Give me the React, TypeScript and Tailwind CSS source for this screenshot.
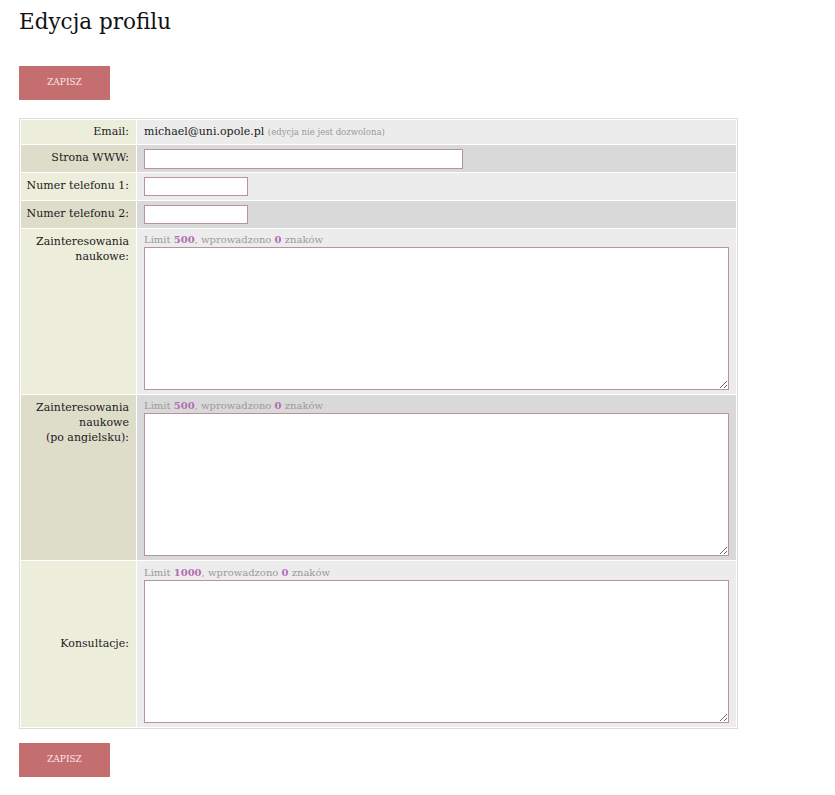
import React from "react";

const serif = { fontFamily: '"DejaVu Serif", serif' };

function SaveButton() {
  return (
    <button
      type="button"
      className="w-[91px] h-[34px] bg-[#c46e70] text-[#fde6e6] text-[9px] flex items-center justify-center"
    >
      ZAPISZ
    </button>
  );
}

function Hint({ limit }: { limit: number }) {
  return (
    <div className="text-[10px] leading-[13px] text-[#9a9a9a] mb-[1px]">
      Limit <b className="text-[#b26db3]">{limit}</b>, wprowadzono{" "}
      <b className="text-[#b26db3]">0</b> znaków
    </div>
  );
}

const labelLight = "bg-[#ededdb]";
const labelDark = "bg-[#ddddca]";
const valueLight = "bg-[#ececec]";
const valueDark = "bg-[#d9d9d9]";

const inputCls = "block bg-white border border-[#b8939b] outline-none";

export default function App() {
  return (
    <div className="min-h-[795px] bg-white pl-[19px] text-[#1a1a1a]" style={serif}>
      <h1 className="pt-[9px] text-[21.5px] leading-[25px] font-normal text-[#111]">
        Edycja profilu
      </h1>

      <div className="mt-[32px]">
        <SaveButton />
      </div>

      <table className="mt-[18px] w-[719px] border border-[#dcdcdc] border-separate border-spacing-[1px] bg-white text-[11px] table-fixed">
        <colgroup>
          <col className="w-[115px]" />
          <col />
        </colgroup>
        <tbody>
          <tr>
            <td className={`${labelLight} h-[24px] pr-[7px] text-right align-middle`}>Email:</td>
            <td className={`${valueLight} px-[7px] align-middle`}>
              <span className="text-[11px]">michael@uni.opole.pl</span>{" "}
              <span className="text-[8.5px] text-[#999]">(edycja nie jest dozwolona)</span>
            </td>
          </tr>
          <tr>
            <td className={`${labelDark} h-[27px] pr-[7px] text-right align-middle`}>Strona WWW:</td>
            <td className={`${valueDark} px-[7px] align-middle`}>
              <input type="text" className={`${inputCls} w-[319px] h-[20px]`} />
            </td>
          </tr>
          <tr>
            <td className={`${labelLight} h-[27px] pr-[7px] text-right align-middle`}>Numer telefonu 1:</td>
            <td className={`${valueLight} px-[7px] align-middle`}>
              <input type="text" className={`${inputCls} w-[104px] h-[19px]`} />
            </td>
          </tr>
          <tr>
            <td className={`${labelDark} h-[27px] pr-[7px] text-right align-middle`}>Numer telefonu 2:</td>
            <td className={`${valueDark} px-[7px] align-middle`}>
              <input type="text" className={`${inputCls} w-[104px] h-[19px]`} />
            </td>
          </tr>
          <tr>
            <td className={`${labelLight} h-[165px] pr-[7px] pt-[5px] text-right align-top leading-[15px]`}>
              Zainteresowania
              <br />
              naukowe:
            </td>
            <td className={`${valueLight} px-[7px] pt-[4px] align-top`}>
              <Hint limit={500} />
              <textarea className={`${inputCls} w-full h-[143px]`} />
            </td>
          </tr>
          <tr>
            <td className={`${labelDark} h-[165px] pr-[7px] pt-[5px] text-right align-top leading-[15px]`}>
              Zainteresowania
              <br />
              naukowe
              <br />
              (po angielsku):
            </td>
            <td className={`${valueDark} px-[7px] pt-[4px] align-top`}>
              <Hint limit={500} />
              <textarea className={`${inputCls} w-full h-[143px]`} />
            </td>
          </tr>
          <tr>
            <td className={`${labelLight} h-[166px] pr-[7px] text-right align-middle`}>Konsultacje:</td>
            <td className={`${valueLight} px-[7px] pt-[5px] align-top`}>
              <Hint limit={1000} />
              <textarea className={`${inputCls} w-full h-[143px]`} />
            </td>
          </tr>
        </tbody>
      </table>

      <div className="mt-[14px]">
        <SaveButton />
      </div>
    </div>
  );
}
